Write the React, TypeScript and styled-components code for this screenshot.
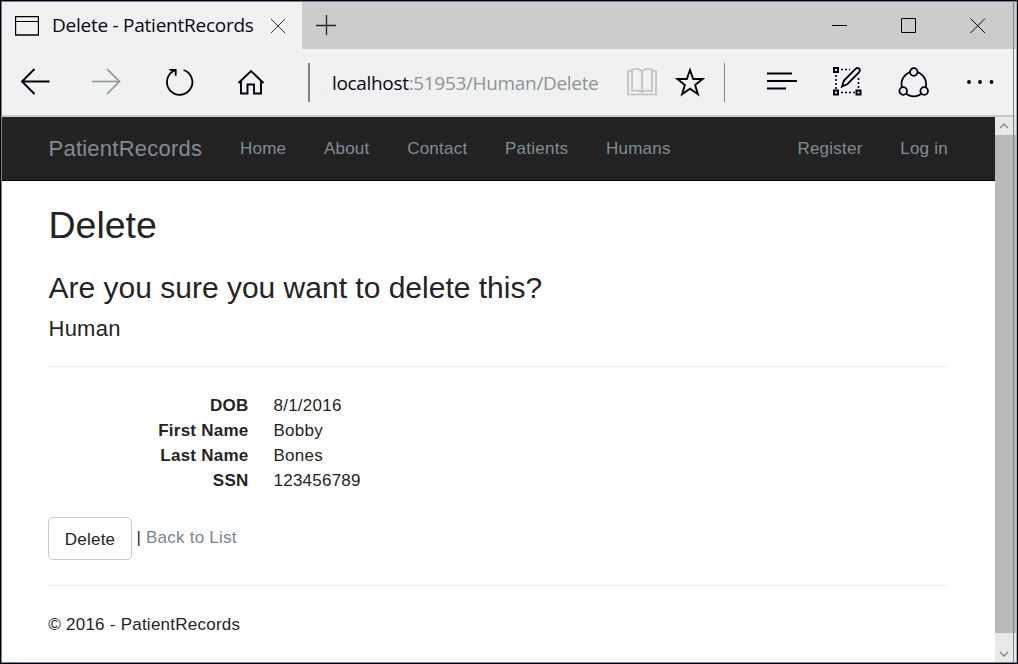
import React from "react";
import styled, { createGlobalStyle } from "styled-components";

const Global = createGlobalStyle`
  * { box-sizing: border-box; }
  body { margin: 0; background: #fff; }
`;

const Window = styled.div`
  display: flex;
  width: 1018px;
  height: 664px;
  border: 1px solid #00000c;
  overflow: hidden;
`;

const Frame = styled.div`
  width: 1013px;
  height: 662px;
  border: 1px solid #78838b;
  display: flex;
  flex-direction: column;
`;

const Edge = styled.div`
  width: 3px;
  display: flex;
  flex-direction: column;
  border-top: 1px solid #78838b;
  border-bottom: 1px solid #78838b;
  border-right: 1px solid #a5abae;
`;

const EdgeStrip = styled.div<{ $h: number; $bg: string }>`
  height: ${(p) => p.$h}px;
  background: ${(p) => p.$bg};
`;

const TabBar = styled.div`
  height: 47px;
  display: flex;
  background: #ccc;
`;

const Tab = styled.div`
  width: 300px;
  display: flex;
  align-items: center;
  background: #f1f1f1;
  padding-left: 13px;
`;

const TabTitle = styled.div`
  width: 204px;
  margin: 0 14px 2px 13px;
  font: 19px/26px "Open Sans", sans-serif;
  letter-spacing: -0.25px;
  white-space: nowrap;
  color: #080814;
`;

const NewTab = styled.div`
  padding: 13px 0 0 14px;
`;

const WindowControls = styled.div`
  display: flex;
  gap: 53px;
  margin-left: auto;
  padding: 15px 27px 0 0;
`;

const Toolbar = styled.div`
  height: 68px;
  display: flex;
  align-items: center;
  padding: 0 18px;
  background: #f1f1f1;
  border-bottom: 2px solid #c8c8c8;
`;

const ToolIcon = styled.svg<{ $ml?: number }>`
  display: block;
  flex: none;
  margin-left: ${(p) => p.$ml ?? 0}px;
  fill: none;
`;

const Divider = styled.div<{ $w: number; $ml: number }>`
  width: ${(p) => p.$w}px;
  height: 39px;
  flex: none;
  margin: 0 0 0 ${(p) => p.$ml}px;
  background: #78868f;
`;

const Address = styled.div`
  width: 268px;
  flex: none;
  margin-left: 22px;
  padding-top: 2px;
  white-space: nowrap;
  font: 19px/28px "Open Sans", sans-serif;
  letter-spacing: -0.33px;
  color: #8b9397;
`;

const Host = styled.span`
  color: #080814;
`;

const Viewport = styled.div`
  flex: 1;
  display: flex;
  min-height: 0;
`;

const Page = styled.div`
  flex: 1;
  background: #fff;
  color: #242424;
  font: 17px/25px "Liberation Sans", Arial, sans-serif;
  letter-spacing: 0.24px;
`;

const Navbar = styled.nav`
  height: 64px;
  display: flex;
  align-items: center;
  padding: 0 47px 0 46.5px;
  background: #222;
  border-bottom: 1px solid #00000c;
  color: #828d95;
`;

const Brand = styled.div`
  width: 191.5px;
  font-size: 22px;
`;

const NavLinks = styled.div`
  display: flex;
  gap: 37.6px;
`;

const AccountLinks = styled(NavLinks)`
  margin-left: auto;
`;

const Content = styled.main`
  padding: 24px 47px 0 46px;
`;

const Title = styled.h2`
  margin: 0;
  padding-left: 0.5px;
  font-size: 37.5px;
  line-height: 41px;
  font-weight: 400;
  letter-spacing: 0;
`;

const Question = styled.h3`
  margin: 25px 0 0;
  padding-left: 0.5px;
  font-size: 30px;
  line-height: 33px;
  font-weight: 400;
  letter-spacing: 0;
`;

const Entity = styled.h4`
  margin: 12px 0 0;
  padding-left: 0.5px;
  font-size: 22px;
  line-height: 25px;
  font-weight: 400;
`;

const Rule = styled.hr`
  height: 1px;
  margin: 25px 0;
  border: 0;
  background: #eee;
`;

const Details = styled.dl`
  display: grid;
  grid-template-columns: 200.5px 1fr;
  column-gap: 25px;
  margin: 0 0 24px;
  padding-top: 1px;
`;

const Term = styled.dt`
  font-weight: 700;
  text-align: right;
`;

const Value = styled.dd`
  margin: 0;
`;

const Actions = styled.div`
  display: flex;
  height: 43px;
`;

const DeleteButton = styled.button`
  width: 84px;
  height: 43px;
  padding: 2px 0 0;
  border: 1px solid #c8cacb;
  border-radius: 5px;
  background: #fff;
  color: inherit;
  font: inherit;
  letter-spacing: inherit;
`;

const Back = styled.div`
  padding: 8px 0 0 4.4px;
`;

const BackLink = styled.span`
  color: #78868f;
`;

const Footer = styled.footer`
  padding: 1px 0 0 0.3px;
`;

const Scrollbar = styled.div`
  width: 18px;
  display: flex;
  flex-direction: column;
  background: #b8b9b9;
`;

const ScrollButton = styled.div<{ $h: number; $top: number }>`
  height: ${(p) => p.$h}px;
  display: flex;
  justify-content: center;
  padding-top: ${(p) => p.$top}px;
  background: #e9e9e9;
`;

const Thumb = styled.div`
  flex: 1;
`;

const ink = "#00000c";

const records = [
  ["DOB", "8/1/2016"],
  ["First Name", "Bobby"],
  ["Last Name", "Bones"],
  ["SSN", "123456789"],
];

export default function App() {
  return (
    <>
      <Global />
      <Window>
        <Frame>
          <TabBar>
            <Tab>
              <ToolIcon width="24" height="20" stroke={ink}>
                <path d="M.5.5h23v18.5H.5z" strokeWidth="1.4" />
                <path d="M.5 5.5h23" />
              </ToolIcon>
              <TabTitle>Delete - PatientRecords</TabTitle>
              <ToolIcon width="16" height="16" stroke="#333">
                <path d="M1 1l14 14M15 1L1 15" />
              </ToolIcon>
            </Tab>
            <NewTab>
              <ToolIcon width="20" height="20" stroke="#222" strokeWidth="1.3">
                <path d="M0 10.5h20M10.5 0v20" />
              </ToolIcon>
            </NewTab>
            <WindowControls>
              <ToolIcon width="16" height="17" stroke={ink}>
                <path d="M0 8.5h15" />
              </ToolIcon>
              <ToolIcon width="16" height="17" stroke={ink}>
                <path d="M.5 1.5h14v14H.5z" />
              </ToolIcon>
              <ToolIcon width="16" height="17" stroke={ink}>
                <path d="M.5 1.5l14.5 14.5M15 1.5L.5 16" />
              </ToolIcon>
            </WindowControls>
          </TabBar>
          <Toolbar>
            <ToolIcon width="30" height="28" stroke={ink} strokeWidth="1.9">
              <path d="M29.5 13.5H2.5M14.5 1L2 13.5 14.5 26" />
            </ToolIcon>
            <ToolIcon $ml={42} width="30" height="28" stroke="#8b969c" strokeWidth="1.7">
              <path d="M0 13.5h28M15 1L27.5 13.5 15 26" />
            </ToolIcon>
            <ToolIcon $ml={43} width="30" height="30" stroke={ink} strokeWidth="1.8">
              <path d="M18.5 3A12.7 12.7 0 1 1 8.5 4L10.7 2.800M4.5 2.8h6.200v6" />
            </ToolIcon>
            <ToolIcon $ml={42} width="28" height="28" stroke={ink} strokeWidth="1.9">
              <path d="M1.500 15L14 3 26.500 15M4 13V25.500h6.500v-9h6.500v9h7V13" />
            </ToolIcon>
            <Divider $w={2} $ml={43} />
            <Address>
              <Host>localhost</Host>:51953/Human/Delete
            </Address>
            <ToolIcon $ml={27} width="30" height="28" stroke="#bfc0c0" strokeWidth="1.7">
              <path d="M5 3H1v23.500h28V3h-4M15 3v20M5 1.500q7-1.500 10 1.500q3-3 10-1.500V23q-7-1-10 1q-3-2-10-1z" />
            </ToolIcon>
            <ToolIcon $ml={18} width="30" height="30" stroke={ink} strokeWidth="1.9">
              <path d="M15 3l3.200 9h9.300l-7.400 6 2.800 9.200-7.900-5.500-7.900 5.500L9.900 18l-7.400-6h9.300z" />
            </ToolIcon>
            <Divider $w={1} $ml={19} />
            <ToolIcon $ml={42} width="30" height="20" stroke={ink} strokeWidth="2">
              <path d="M0 1.500h25M0 9h30M0 16.500h19" />
            </ToolIcon>
            <ToolIcon $ml={36} width="29" height="30" stroke={ink} strokeWidth="2">
              <path d="M1 1h4v4H1zM1 23.500h4v4H1zM23.500 23.500h4v4h-4z" />
              <path d="M8 2.500h9M8 25.500h14M3 8v14M25.500 11v11" strokeDasharray="2 2" strokeWidth="1.6" />
              <path d="M9 19.500l2-6L22.500 1.900q2-1.700 3.600-.2t-.2 3.600L14.500 17z" strokeWidth="1.800" />
            </ToolIcon>
            <ToolIcon $ml={36} width="31" height="31" stroke={ink} strokeWidth="1.8">
              <circle cx="15.800" cy="17" r="12.300" />
              <g fill="#f1f1f1">
                <circle cx="15.800" cy="5" r="3.800" />
                <circle cx="5.200" cy="24" r="3.800" />
                <circle cx="26.200" cy="24" r="3.800" />
              </g>
            </ToolIcon>
            <ToolIcon $ml={37} width="28" height="6">
              <g fill={ink}>
                <circle cx="3" cy="3" r="1.900" />
                <circle cx="14" cy="3" r="1.900" />
                <circle cx="25.500" cy="3" r="1.900" />
              </g>
            </ToolIcon>
          </Toolbar>
          <Viewport>
            <Page>
              <Navbar>
                <Brand>PatientRecords</Brand>
                <NavLinks>
                  <span>Home</span>
                  <span>About</span>
                  <span>Contact</span>
                  <span>Patients</span>
                  <span>Humans</span>
                </NavLinks>
                <AccountLinks>
                  <span>Register</span>
                  <span>Log in</span>
                </AccountLinks>
              </Navbar>
              <Content>
                <Title>Delete</Title>
                <Question>Are you sure you want to delete this?</Question>
                <Entity>Human</Entity>
                <Rule />
                <Details>
                  {records.map(([term, value]) => (
                    <React.Fragment key={term}>
                      <Term>{term}</Term>
                      <Value>{value}</Value>
                    </React.Fragment>
                  ))}
                </Details>
                <Actions>
                  <DeleteButton>Delete</DeleteButton>
                  <Back>
                    | <BackLink>Back to List</BackLink>
                  </Back>
                </Actions>
                <Rule />
                <Footer>© 2016 - PatientRecords</Footer>
              </Content>
            </Page>
            <Scrollbar>
              <ScrollButton $h={18} $top={6}>
                <ToolIcon width="10" height="6" stroke="#78868f" strokeWidth="1.3">
                  <path d="M1 5l4-4 4 4" />
                </ToolIcon>
              </ScrollButton>
              <Thumb />
              <ScrollButton $h={29} $top={18}>
                <ToolIcon width="10" height="6" stroke="#78868f" strokeWidth="1.3">
                  <path d="M1 1l4 4 4-4" />
                </ToolIcon>
              </ScrollButton>
            </Scrollbar>
          </Viewport>
        </Frame>
        <Edge>
          <EdgeStrip $h={47} $bg="#ccc" />
          <EdgeStrip $h={66} $bg="#f1f1f1" />
          <EdgeStrip $h={20} $bg="#e4e4e4" />
          <EdgeStrip $h={498} $bg="#b8b9b9" />
          <EdgeStrip $h={29} $bg="#e9e9e9" />
        </Edge>
      </Window>
    </>
  );
}
